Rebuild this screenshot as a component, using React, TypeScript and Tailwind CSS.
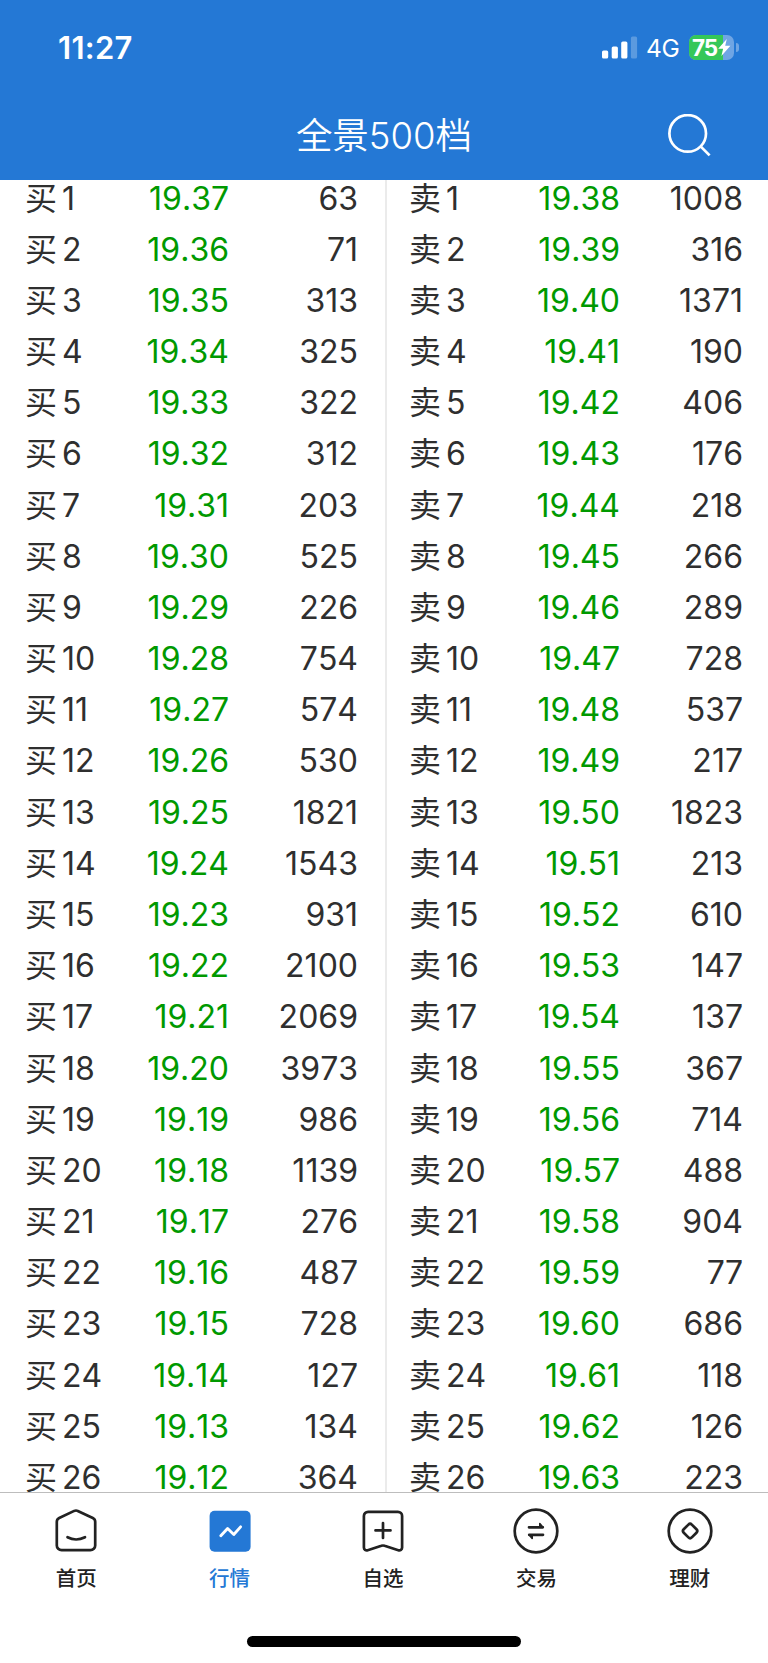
import React from 'react';

type Level = [price: string, volume: number];

const bids: Level[] = [
  ['19.37', 63], ['19.36', 71], ['19.35', 313], ['19.34', 325], ['19.33', 322],
  ['19.32', 312], ['19.31', 203], ['19.30', 525], ['19.29', 226], ['19.28', 754],
  ['19.27', 574], ['19.26', 530], ['19.25', 1821], ['19.24', 1543], ['19.23', 931],
  ['19.22', 2100], ['19.21', 2069], ['19.20', 3973], ['19.19', 986], ['19.18', 1139],
  ['19.17', 276], ['19.16', 487], ['19.15', 728], ['19.14', 127], ['19.13', 134],
  ['19.12', 364],
];

const asks: Level[] = [
  ['19.38', 1008], ['19.39', 316], ['19.40', 1371], ['19.41', 190], ['19.42', 406],
  ['19.43', 176], ['19.44', 218], ['19.45', 266], ['19.46', 289], ['19.47', 728],
  ['19.48', 537], ['19.49', 217], ['19.50', 1823], ['19.51', 213], ['19.52', 610],
  ['19.53', 147], ['19.54', 137], ['19.55', 367], ['19.56', 714], ['19.57', 488],
  ['19.58', 904], ['19.59', 77], ['19.60', 686], ['19.61', 118], ['19.62', 126],
  ['19.63', 223],
];

const StatusBar = () => (
  <div className="flex h-[93px] items-center justify-between pl-[58px] pr-[29px] pt-[2px] text-white">
    <span className="text-[31px] leading-none font-semibold tracking-[0.3px] [font-kerning:none]">11:27</span>
    <div className="flex items-center">
      <svg width="36" height="24" viewBox="0 0 36 24" fill="currentColor">
        <rect x="0" y="14.5" width="6.2" height="8" rx="1.6" />
        <rect x="9.7" y="10.5" width="6.2" height="12" rx="1.6" />
        <rect x="19.2" y="5.5" width="6.2" height="17" rx="1.6" />
        <rect x="28.9" y="0.5" width="6.2" height="22" rx="1.6" opacity="0.25" />
      </svg>
      <span className="mt-[2px] ml-[8px] w-[33px] text-[24.5px] leading-none tracking-[-0.4px]">4G</span>
      <div className="relative ml-[10px] flex h-[25px] w-[45px] items-center overflow-hidden rounded-[7px] bg-[#6fa5e4]">
        <div className="h-full w-[34px] bg-[#34c759]" />
        <span className="absolute left-[3px] top-[1px] text-[22.5px] leading-[24px] font-bold tracking-[-1px]">75</span>
        <svg className="absolute left-[29px] top-[4px]" width="13" height="17" viewBox="0 0 13 17" fill="currentColor">
          <path d="M8.8 0 0.2 9.8h4.9L3.4 17l9-10.2H7.2z" />
        </svg>
      </div>
      <div className="ml-[2px] h-[9px] w-[3px] rounded-r-full bg-[#6fa5e4]" />
    </div>
  </div>
);

const Header = () => (
  <div className="grid h-[87px] grid-cols-[1fr_auto_1fr] items-center text-white">
    <span />
    <h1 className="text-[36.5px] leading-none font-[350]">全景500档</h1>
    <button className="mr-[56px] justify-self-end">
      <svg width="46" height="46" viewBox="0 0 46 46" fill="none" stroke="currentColor" strokeWidth="2.7">
        <circle cx="21.7" cy="19.4" r="18.3" />
        <path d="m34.6 32.4 9 9" />
      </svg>
    </button>
  </div>
);

interface BookSideProps {
  label: string;
  levels: Level[];
  className: string;
}

const BookSide = ({ label, levels, className }: BookSideProps) => (
  <div className={className}>
    {levels.map(([price, volume], index) => (
      <div key={price} className="flex h-[51.18px] items-center text-[32px] leading-none [font-kerning:none]">
        <span className="flex w-[84px] gap-[5px] whitespace-nowrap text-[#2f2f2f]">
          <span>{label}</span>
          <span>{index + 1}</span>
        </span>
        <span className="flex-1 text-right text-[#009900]">{price}</span>
        <span className="w-[var(--volume)] text-right text-[#2f2f2f]">{volume}</span>
      </div>
    ))}
  </div>
);

const HomeIcon = () => (
  <>
    <path d="M21.2 2.9a4.3 4.3 0 0 1 3.6 0l15 7.1a4.2 4.2 0 0 1 2.4 3.8V37.4a4.8 4.8 0 0 1-4.8 4.8H8.6a4.8 4.8 0 0 1-4.8-4.8V13.8A4.2 4.2 0 0 1 6.2 10z" />
    <path d="M14.5 29.2q8.5 4.6 17.5 0" strokeLinecap="round" />
  </>
);

const QuoteIcon = () => (
  <>
    <rect x="2.6" y="2.7" width="41" height="41" rx="5" fill="currentColor" stroke="none" />
    <path d="m13.8 27.8 6.8-7.3 6.2 6 6.8-7.6" stroke="white" strokeWidth="2.9" strokeLinecap="round" strokeLinejoin="round" />
  </>
);

const WatchIcon = () => (
  <>
    <path d="M8.1 3.8h29.8a4.2 4.2 0 0 1 4.2 4.2v31.5a2.8 2.8 0 0 1-3.8 2.7L24.6 37.8a4.5 4.5 0 0 0-3.2 0L7.7 42.2a2.8 2.8 0 0 1-3.8-2.7V8a4.2 4.2 0 0 1 4.2-4.2z" />
    <path d="M23 15v15M15.5 22.4h15" strokeLinecap="round" />
  </>
);

const TradeIcon = () => (
  <>
    <circle cx="23" cy="23" r="21.3" />
    <path d="M16 19.3h13.8M30 26.8H16.2" strokeLinecap="round" />
    <path d="M26.8 15.6l3.2 3.7h-3.2zM19.2 30.5l-3.2-3.7h3.2z" fill="currentColor" strokeWidth="1.6" strokeLinejoin="round" />
  </>
);

const WealthIcon = () => (
  <>
    <circle cx="23" cy="23" r="21.3" />
    <rect x="17.4" y="17.3" width="11.4" height="11.4" rx="2.4" transform="rotate(45 23.1 23)" />
  </>
);

const tabs = [
  { name: '首页', icon: HomeIcon },
  { name: '行情', icon: QuoteIcon, active: true },
  { name: '自选', icon: WatchIcon },
  { name: '交易', icon: TradeIcon },
  { name: '理财', icon: WealthIcon },
];

const TabBar = () => (
  <nav className="flex h-[171px] flex-col items-center border-t border-[#bdbdbd] bg-white">
    <div className="grid w-full grid-cols-5 pt-[15px] pr-[1px]">
      {tabs.map(({ name, icon: Icon, active }) => (
        <button
          key={name}
          className={`flex flex-col items-center pr-[1px] ${active ? 'text-[#2478d5]' : 'text-[#222222]'}`}
        >
          <svg width="46" height="46" viewBox="0 0 46 46" fill="none" stroke="currentColor" strokeWidth="2.7">
            <Icon />
          </svg>
          <span className="mt-[15px] text-[20.5px] leading-[20px] font-medium">{name}</span>
        </button>
      ))}
    </div>
    {/* Home indicator */}
    <div className="mt-[47px] h-[11px] w-[274px] rounded-full bg-black" />
  </nav>
);

export default function App() {
  return (
    <div className="flex h-[1663px] w-[768px] flex-col overflow-hidden bg-white font-['Inter','Noto_Sans_CJK_SC',sans-serif]">
      <header className="shrink-0 bg-[#2478d5]">
        <StatusBar />
        <Header />
      </header>
      <main className="flex h-[1312px] shrink-0 overflow-hidden">
        <BookSide label="买" levels={bids} className="-mt-[7px] w-[385px] pl-[25px] pr-[27px] [--volume:129px]" />
        <div className="w-[2px] bg-[#ebebeb]" />
        <BookSide label="卖" levels={asks} className="-mt-[7px] w-[381px] pl-[22px] pr-[25px] [--volume:123px]" />
      </main>
      <TabBar />
    </div>
  );
}
